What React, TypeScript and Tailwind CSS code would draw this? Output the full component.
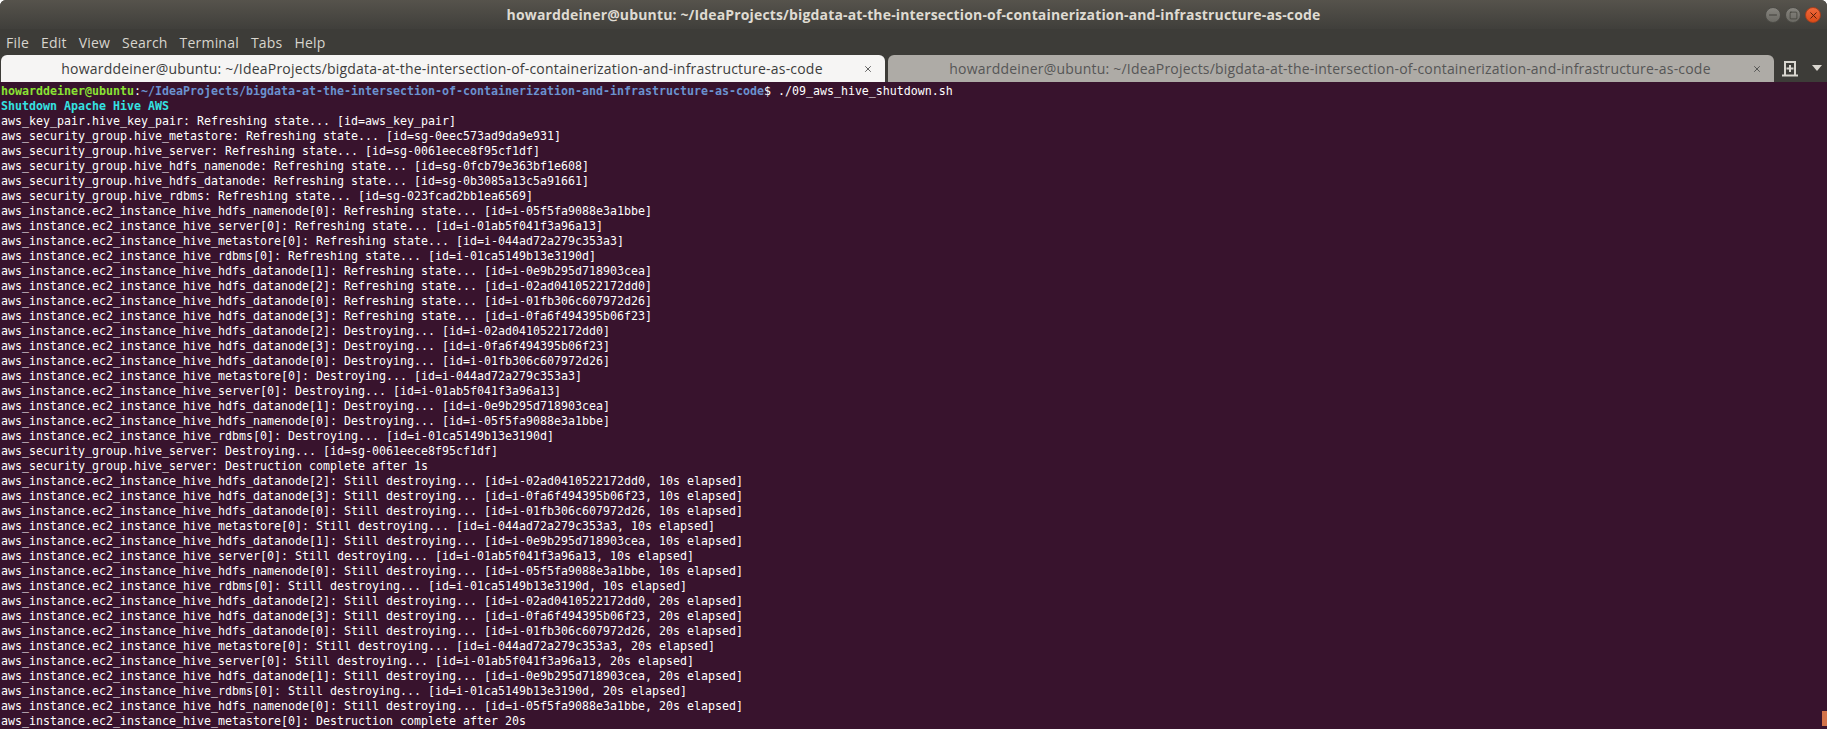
import React from 'react';
import { X, Minus, Square } from 'lucide-react';

const title = 'howarddeiner@ubuntu: ~/IdeaProjects/bigdata-at-the-intersection-of-containerization-and-infrastructure-as-code';
const menus = ['File', 'Edit', 'View', 'Search', 'Terminal', 'Tabs', 'Help'];

const nn = 'aws_instance.ec2_instance_hive_hdfs_namenode[0]';
const srv = 'aws_instance.ec2_instance_hive_server[0]';
const ms = 'aws_instance.ec2_instance_hive_metastore[0]';
const db = 'aws_instance.ec2_instance_hive_rdbms[0]';
const dn = (i: number) => `aws_instance.ec2_instance_hive_hdfs_datanode[${i}]`;

const ids: Record<string, string> = {
  [nn]: 'i-05f5fa9088e3a1bbe',
  [srv]: 'i-01ab5f041f3a96a13',
  [ms]: 'i-044ad72a279c353a3',
  [db]: 'i-01ca5149b13e3190d',
  [dn(0)]: 'i-01fb306c607972d26',
  [dn(1)]: 'i-0e9b295d718903cea',
  [dn(2)]: 'i-02ad0410522172dd0',
  [dn(3)]: 'i-0fa6f494395b06f23',
};

const refresh = (r: string) => `${r}: Refreshing state... [id=${ids[r]}]`;
const destroy = (r: string) => `${r}: Destroying... [id=${ids[r]}]`;
const still = (r: string, s: number) => `${r}: Still destroying... [id=${ids[r]}, ${s}s elapsed]`;

const output = [
  'aws_key_pair.hive_key_pair: Refreshing state... [id=aws_key_pair]',
  'aws_security_group.hive_metastore: Refreshing state... [id=sg-0eec573ad9da9e931]',
  'aws_security_group.hive_server: Refreshing state... [id=sg-0061eece8f95cf1df]',
  'aws_security_group.hive_hdfs_namenode: Refreshing state... [id=sg-0fcb79e363bf1e608]',
  'aws_security_group.hive_hdfs_datanode: Refreshing state... [id=sg-0b3085a13c5a91661]',
  'aws_security_group.hive_rdbms: Refreshing state... [id=sg-023fcad2bb1ea6569]',
  ...[nn, srv, ms, db, dn(1), dn(2), dn(0), dn(3)].map(refresh),
  ...[dn(2), dn(3), dn(0), ms, srv, dn(1), nn, db].map(destroy),
  'aws_security_group.hive_server: Destroying... [id=sg-0061eece8f95cf1df]',
  'aws_security_group.hive_server: Destruction complete after 1s',
  ...[dn(2), dn(3), dn(0), ms, dn(1), srv, nn, db].map((r) => still(r, 10)),
  ...[dn(2), dn(3), dn(0), ms, srv, dn(1), db, nn].map((r) => still(r, 20)),
  `${ms}: Destruction complete after 20s`,
];

const Tab: React.FC<{ active?: boolean }> = ({ active }) => (
  <div
    className={`flex h-[27px] items-center rounded-t-[6px] ${
      active ? 'w-[884px] bg-[#f6f5f4] text-[#3d3d3d]' : 'ml-[3px] w-[886px] bg-[#aeaba6] text-[#565656]'
    }`}
  >
    <span className="flex-1 pl-[20px] text-center text-[14px] tracking-[0.2px]">{title}</span>
    <X className="mr-[12px] text-[#444]" size={10} strokeWidth={2} />
  </div>
);

const WinButton: React.FC<{ children: React.ReactNode; close?: boolean }> = ({ children, close }) => (
  <div
    className={`flex h-[16px] w-[16px] items-center justify-center rounded-full border bg-gradient-to-b ${
      close
        ? 'border-[#a8401c] from-[#f0683a] to-[#dc4c17] text-[#4a1a08]'
        : 'border-[#4c4b46] from-[#86847e] to-[#6b6a64] text-[#2f2e28]'
    }`}
  >
    {children}
  </div>
);

export default function App() {
  return (
    <div className="relative h-[729px] w-[1827px] overflow-hidden bg-white font-['Open_Sans','Noto_Sans',sans-serif]">
      <div className="rounded-t-[6px] bg-[#3d3c38]">
        {/* title bar */}
        <div className="relative flex h-[29px] items-center justify-center rounded-t-[6px] bg-gradient-to-b from-[#56534c] to-[#403f3b]">
          <span className="text-[14px] font-bold tracking-[0.15px] text-[#dfdbd2]">{title}</span>
          <div className="absolute right-[6px] top-[7px] flex gap-[4px]">
            <WinButton><Minus size={12} strokeWidth={1.5} /></WinButton>
            <WinButton><Square size={9} strokeWidth={1.5} /></WinButton>
            <WinButton close><X size={11} strokeWidth={2} /></WinButton>
          </div>
        </div>
        {/* menu bar */}
        <div className="flex h-[26px] items-center gap-[12px] pl-[6px] text-[14px] tracking-[0.2px] text-[#d8d5ce]">
          {menus.map((m) => (
            <span key={m}>{m}</span>
          ))}
        </div>
        {/* tabs */}
        <div className="flex items-end pl-[1px]">
          <Tab active />
          <Tab />
          <svg className="ml-[7px] mb-[5px]" width="18" height="17" viewBox="0 0 18 17" fill="none" stroke="#d9d6cf" strokeWidth="2">
            <path d="M4 15V2h10v13" />
            <path d="M1 15.5h16" />
            <path d="M9 5v7M5.5 8.5h7" />
          </svg>
          <svg className="ml-[13px] mb-[11px]" width="10" height="6" viewBox="0 0 10 6" fill="#d9d6cf">
            <path d="M0 0h10L5 6z" />
          </svg>
        </div>
      </div>
      {/* terminal */}
      <div className="h-[647px] bg-[#38132d] pl-[1px] pt-[2px] font-['DejaVu_Sans_Mono',monospace] text-[11.63px] leading-[15px] whitespace-pre text-white">
        <div>
          <span className="font-bold text-[#8ae234]">howarddeiner@ubuntu</span>
          <span>:</span>
          <span className="font-bold text-[#6b92cf]">~/IdeaProjects/bigdata-at-the-intersection-of-containerization-and-infrastructure-as-code</span>
          <span>$ ./09_aws_hive_shutdown.sh</span>
        </div>
        <div className="font-bold text-[#34e2e2]">Shutdown Apache Hive AWS</div>
        {output.map((line, i) => (
          <div key={i}>{line}</div>
        ))}
      </div>
      {/* scrollbar thumb */}
      <div className="absolute right-0 top-[711px] h-[15px] w-[5px] bg-[#d3734a]" />
    </div>
  );
}
